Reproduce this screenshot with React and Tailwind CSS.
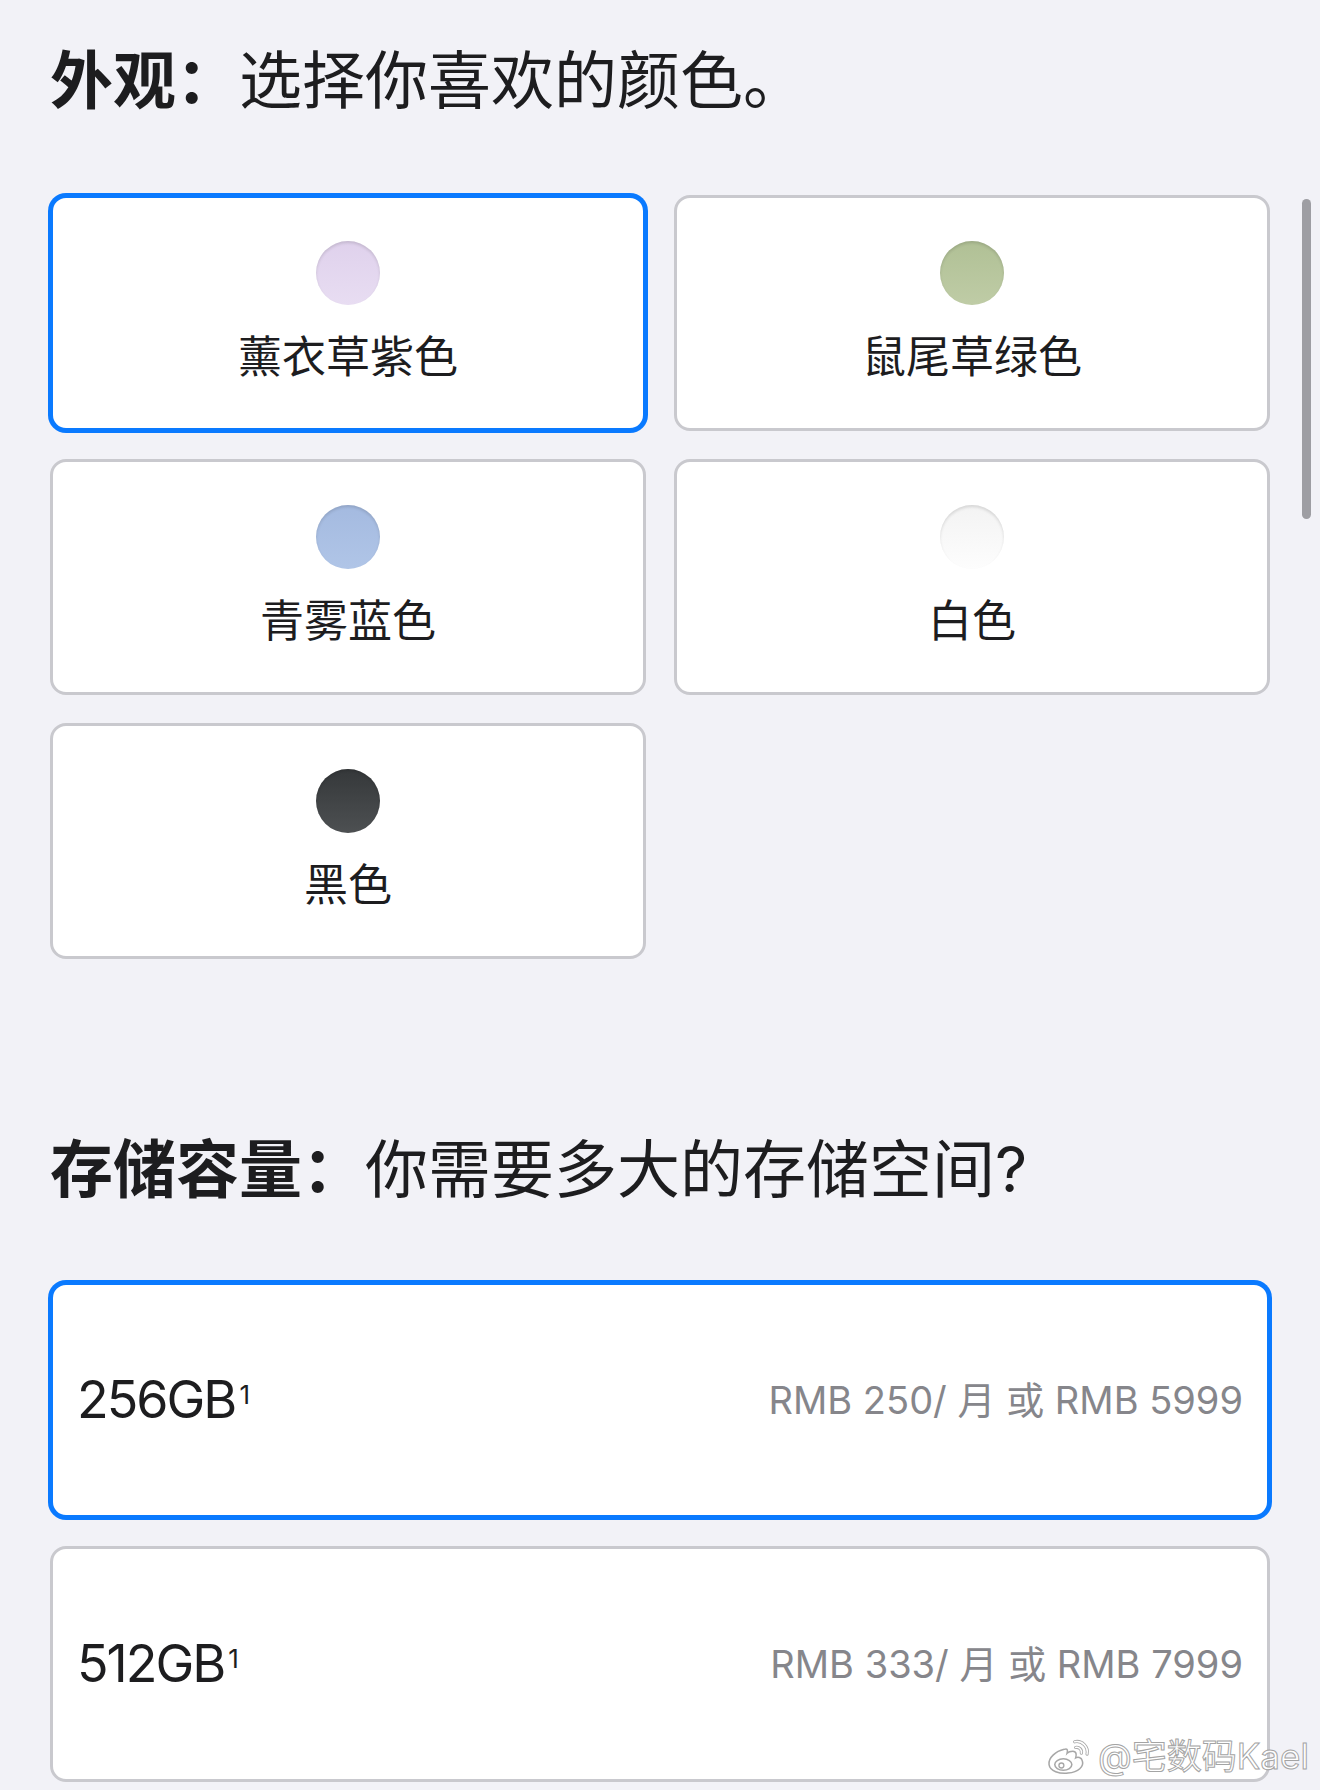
import React from "react";

const colors = [
  { name: "薰衣草紫色", swatch: "bg-[linear-gradient(180deg,#dfd1ec,#e8ddf2)]", selected: true },
  { name: "鼠尾草绿色", swatch: "bg-[linear-gradient(180deg,#b0c095,#bfcca6)]" },
  { name: "青雾蓝色", swatch: "bg-[linear-gradient(180deg,#a4bae0,#b0c5e7)]" },
  { name: "白色", swatch: "bg-[linear-gradient(180deg,#f3f3f3,#fdfdfd)]" },
  { name: "黑色", swatch: "bg-[linear-gradient(180deg,#35383a,#4d5052)]" },
];

const storage = [
  { size: "256GB", price: "RMB 250/ 月 或 RMB 5999", selected: true },
  { size: "512GB", price: "RMB 333/ 月 或 RMB 7999" },
];

const Card = ({ selected, className = "", children }) => (
  <div
    className={`h-[236px] rounded-[16px] border-[3px] bg-white ${
      selected ? "border-[#0a7aff] shadow-[0_0_0_2px_#0a7aff]" : "border-[#c9c9ce]"
    } ${className}`}
  >
    {children}
  </div>
);

const Heading = ({ bold, rest }) => (
  <h2 className="text-[63px] leading-[63px] text-[#1d1d1f] whitespace-nowrap">
    <span className="font-bold">{bold}</span>
    <span className="font-normal">{rest}</span>
  </h2>
);

const WeiboLogo = () => (
  <svg width="46" height="38" viewBox="0 0 48 40" fill="none">
    <path
      d="M19 13C10 15 2 22 3 29c1 7 11 10 20 9 11-1 17-7 15-13-1-4-5-4-7-3 1-3 1-7-3-7-2 0-5 1-6 2 1-4 0-5-3-4z"
      fill="white"
      stroke="#a3a3a3"
      strokeWidth="1.6"
    />
    <ellipse cx="18" cy="29" rx="9" ry="6" stroke="#a3a3a3" strokeWidth="1.6" />
    <circle cx="16" cy="30" r="2.6" stroke="#a3a3a3" strokeWidth="1.4" />
    <path d="M30 5a11 11 0 0 1 13 13" stroke="#a3a3a3" strokeWidth="3.4" strokeLinecap="round" />
    <path d="M30 5a11 11 0 0 1 13 13" stroke="white" strokeWidth="1.6" strokeLinecap="round" />
    <path d="M31 11a5 5 0 0 1 6 6" stroke="#a3a3a3" strokeWidth="3.4" strokeLinecap="round" />
    <path d="M31 11a5 5 0 0 1 6 6" stroke="white" strokeWidth="1.6" strokeLinecap="round" />
  </svg>
);

export default function App() {
  return (
    <div
      className="relative min-h-[1790px] overflow-hidden bg-[#f2f2f7] px-[50px] pt-[49px]"
      style={{ fontFamily: 'Inter, "Noto Sans CJK SC", sans-serif' }}
    >
      <Heading bold="外观：" rest="选择你喜欢的颜色。" />

      <div className="mt-[83px] grid grid-cols-2 gap-[28px]">
        {colors.map(({ name, swatch, selected }) => (
          <Card key={name} selected={selected} className="flex flex-col items-center pt-[43px]">
            <div className={`h-[64px] w-[64px] rounded-full shadow-[inset_0_2px_3px_rgba(0,0,0,0.12)] ${swatch}`} />
            <div className="mt-[30px] text-[44px] leading-[44px] text-[#1d1d1f]">{name}</div>
          </Card>
        ))}
      </div>

      <div className="mt-[179px]">
        <Heading bold="存储容量：" rest="你需要多大的存储空间?" />
      </div>

      <div className="mt-[81px] flex flex-col gap-[28px]">
        {storage.map(({ size, price, selected }) => (
          <Card key={size} selected={selected} className="flex items-center justify-between px-[24px]">
            <div className="text-[52px] leading-[52px] tracking-[-2px] text-[#1d1d1f]">
              {size}
              <span className="ml-[4px] align-[14px] text-[26px] leading-none tracking-normal">1</span>
            </div>
            <div className="text-[38px] leading-[38px] text-[#86868b]">{price}</div>
          </Card>
        ))}
      </div>

      {/* overlay scroll indicator */}
      <div className="absolute left-[1302px] top-[199px] h-[320px] w-[9px] rounded-full bg-[#9e9ea3]" />

      {/* watermark */}
      <div className="absolute left-[1046px] top-[1736px] flex items-center gap-[6px] opacity-95">
        <WeiboLogo />
        <span className="text-[35px] leading-[40px] text-white [-webkit-text-stroke:1px_#a0a0a0]">@宅数码Kael</span>
      </div>
    </div>
  );
}
